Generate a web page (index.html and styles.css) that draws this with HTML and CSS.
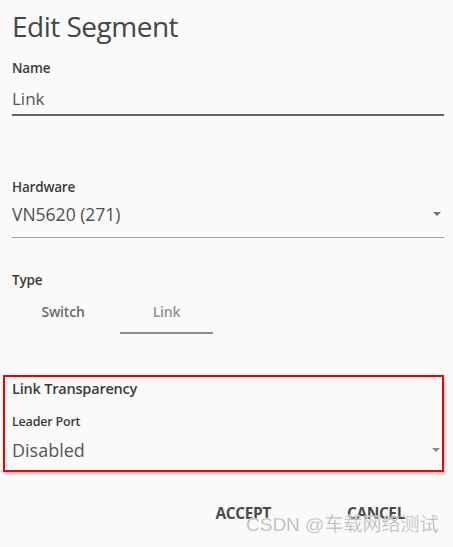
FILE: index.html
```html
<!DOCTYPE html>
<html>
<head>
<meta charset="utf-8">
<link rel="stylesheet" href="styles.css">
</head>
<body>
<div class="dialog">
  <h1 class="title">Edit Segment</h1>

  <div class="field name-field">
    <div class="label">Name</div>
    <div class="input">Link</div>
  </div>

  <div class="field hw-field">
    <div class="label">Hardware</div>
    <div class="select">
      <span>VN5620 (271)</span>
      <span class="caret"></span>
    </div>
  </div>

  <div class="field type-field">
    <div class="label">Type</div>
    <div class="tabs">
      <div class="tab">Switch</div>
      <div class="tab active">Link</div>
    </div>
  </div>

  <div class="highlight">
    <div class="section-title">Link Transparency</div>
    <div class="label small">Leader Port</div>
    <div class="select plain">
      <span>Disabled</span>
      <span class="caret"></span>
    </div>
  </div>

  <div class="actions">
    <div class="btn accept">ACCEPT</div>
    <div class="btn cancel">CANCEL</div>
  </div>
</div>
<div class="watermark">CSDN @车载网络测试</div>
</body>
</html>
```
FILE: styles.css
```css
html, body {
  margin: 0;
  padding: 0;
  background: #fafafa;
}
body {
  font-family: "Open Sans", "Noto Sans", sans-serif;
  color: #444;
  width: 453px;
  height: 547px;
  overflow: hidden;
  position: relative;
}
.dialog {
  padding: 0 9px 0 12px;
}
.title {
  margin: 0;
  font-size: 28px;
  font-weight: 400;
  color: #464646;
  line-height: 38px;
  height: 47px;
  padding-top: 7px;
  box-sizing: border-box;
  letter-spacing: -0.5px;
}
.label {
  font-size: 13.5px;
  font-weight: 600;
  color: #3a3a3a;
  line-height: 20px;
  letter-spacing: -0.2px;
}
.name-field {
  padding-top: 11px;
}
.input {
  font-size: 17px;
  color: #555;
  line-height: 26px;
  padding-top: 8px;
  padding-bottom: 2px;
  border-bottom: 2px solid #5f6466;
}
.hw-field {
  padding-top: 61px;
}
.select {
  display: flex;
  justify-content: space-between;
  align-items: center;
  font-size: 17.5px;
  color: #505050;
  line-height: 26px;
  padding-top: 4px;
  padding-bottom: 10px;
  border-bottom: 1px solid #a0a0a0;
}
.caret {
  width: 0;
  height: 0;
  border-left: 4px solid transparent;
  border-right: 4px solid transparent;
  border-top: 4px solid #707070;
  margin-right: 3px;
}
.type-field {
  padding-top: 32px;
}
.tabs {
  display: flex;
  gap: 6px;
  padding-top: 11px;
}
.tab {
  width: 102px;
  text-align: center;
  font-size: 14px;
  font-weight: 600;
  color: #6a6a6a;
  line-height: 22px;
  padding-bottom: 9px;
  border-bottom: 2px solid transparent;
  letter-spacing: -0.2px;
}
.tab.active {
  width: 93px;
  color: #8c9296;
  border-bottom-color: #878f93;
}
.highlight {
  margin: 41px 0 0 -9px;
  border: 2px solid #f00000;
  padding: 0 2px 7px 7px;
  box-shadow: 1px 2px 3px rgba(0,0,0,0.25);
}
.section-title {
  font-size: 14.5px;
  font-weight: 600;
  color: #3a3a3a;
  line-height: 20px;
  padding-top: 2px;
  letter-spacing: -0.2px;
}
.label.small {
  font-size: 12.5px;
  padding-top: 13px;
}
.select.plain {
  border-bottom: none;
  font-size: 18px;
  padding-top: 5px;
  padding-bottom: 0;
  color: #555;
}
.select.plain .caret {
  margin-right: 0;
  border-top-color: #888;
}
.actions {
  display: flex;
  justify-content: flex-end;
  padding-top: 31px;
  padding-right: 39px;
}
.btn {
  font-size: 15.5px;
  font-weight: 700;
  color: #4a4a4a;
  letter-spacing: -0.4px;
  line-height: 20px;
}
.cancel {
  margin-left: 76px;
}
.watermark {
  position: absolute;
  left: 246px;
  top: 511px;
  font-family: "Liberation Sans", "Noto Sans CJK SC", sans-serif;
  font-size: 19px;
  color: #b0b0b0;
  line-height: 28px;
  -webkit-text-stroke: 0.3px #fff;
}
```
